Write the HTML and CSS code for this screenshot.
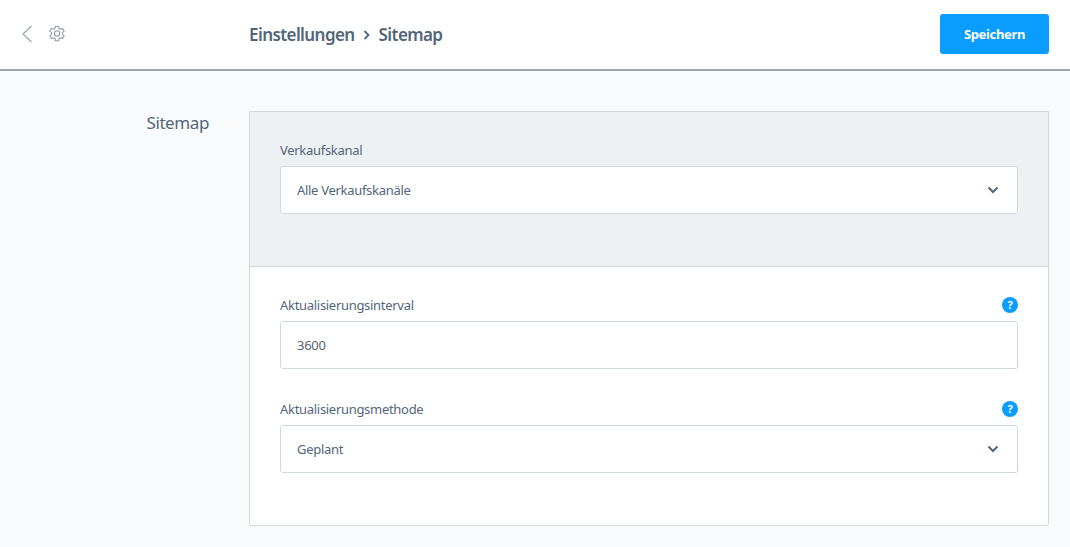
FILE: index.html
```html
<!DOCTYPE html>
<html lang="de">
<head>
<meta charset="utf-8">
<title>Sitemap</title>
<link rel="stylesheet" href="styles.css">
</head>
<body>
<header class="topbar">
  <div class="nav-icons">
    <svg class="icon-back" width="12" height="18" viewBox="0 0 12 18"><path d="M10.500 1 2 9l8.500 8" fill="none" stroke="#9aa8b5" stroke-width="1.300"/></svg>
    <svg class="icon-gear" width="18" height="18" viewBox="0 0 18 18" fill="none" stroke="#8d9aa7" stroke-width="1.100" stroke-linejoin="round"><path d="M7.400 1.200h3.200l.4 2.200 1.500.8 2.100-.8 1.600 2.800-1.700 1.400v1.800l1.700 1.400-1.600 2.800-2.100-.8-1.500.8-.4 2.200H7.400L7 13.600l-1.500-.8-2.100.8-1.600-2.800 1.700-1.400V7.600L1.800 6.200l1.600-2.800 2.100.8L7 3.400z"/><circle cx="9" cy="8.500" r="2.700"/></svg>
  </div>
  <div class="crumbs">
    <span>Einstellungen</span>
    <svg class="crumb-sep" width="8" height="12" viewBox="0 0 8 12"><path d="m1.500 2 4 4-4 4" fill="none" stroke="#52667a" stroke-width="1.800"/></svg>
    <span>Sitemap</span>
  </div>
  <button class="save" type="button">Speichern</button>
</header>
<main class="content">
  <h2 class="section-title">Sitemap</h2>
  <section class="card">
    <div class="card-top">
      <div class="field">
        <div class="label-row"><label>Verkaufskanal</label></div>
        <div class="control"><span>Alle Verkaufskanäle</span>
          <svg class="chev" width="12" height="8" viewBox="0 0 12 8"><path d="m1.500 1.500 4.500 4.500 4.500-4.500" fill="none" stroke="#52667a" stroke-width="2"/></svg>
        </div>
      </div>
    </div>
    <div class="card-body">
      <div class="field">
        <div class="label-row"><label>Aktualisierungsinterval</label><span class="help">?</span></div>
        <div class="control"><span>3600</span></div>
      </div>
      <div class="field">
        <div class="label-row"><label>Aktualisierungsmethode</label><span class="help">?</span></div>
        <div class="control"><span>Geplant</span>
          <svg class="chev" width="12" height="8" viewBox="0 0 12 8"><path d="m1.500 1.500 4.500 4.500 4.500-4.500" fill="none" stroke="#52667a" stroke-width="2"/></svg>
        </div>
      </div>
    </div>
  </section>
</main>
</body>
</html>
```
FILE: styles.css
```css
* { box-sizing: border-box; }
html, body { margin: 0; height: 100%; }
body {
  background: #f9fafb;
  color: #52667a;
  font-family: "Noto Sans", sans-serif;
  font-size: 13px;
  overflow: hidden;
}
.topbar {
  height: 71px;
  background: #fff;
  border-bottom: 2px solid #9aa8b5;
  display: grid;
  grid-template-columns: 249px 1fr auto;
  align-items: center;
  padding-right: 21px;
}
.nav-icons {
  display: flex;
  align-items: center;
  gap: 15px;
  padding-left: 21px;
  padding-bottom: 1px;
}
.crumbs {
  display: flex;
  align-items: center;
  gap: 8px;
  font-size: 17px;
  font-weight: 600;
  letter-spacing: -0.58px;
  color: #52667a;
}
.save {
  width: 109px;
  height: 40px;
  margin-bottom: 1px;
  border: 0;
  border-radius: 3px;
  background: #0a9dff;
  color: #fff;
  font: 700 13px "Noto Sans", sans-serif;
  letter-spacing: -0.33px;
}
.content {
  display: grid;
  grid-template-columns: 249px 800px;
  padding-top: 40px;
}
.section-title {
  margin: 0;
  padding: 0 40px 0 0;
  text-align: right;
  font-size: 17px;
  font-weight: 400;
  line-height: 24px;
  letter-spacing: -0.4px;
  color: #52667a;
}
.card {
  height: 415px;
  background: #fff;
  border: 1px solid #d1d9e0;
  border-radius: 0 0 3px 3px;
  overflow: hidden;
}
.card-top {
  height: 155px;
  padding: 29px 30px 0;
  background: #eef1f4;
  border-bottom: 1px solid #d1d9e0;
}
.card-body {
  display: flex;
  flex-direction: column;
  gap: 31px;
  padding: 29px 30px 0;
}
.label-row {
  display: flex;
  justify-content: space-between;
  align-items: center;
  height: 18px;
  margin-bottom: 7px;
}
.label-row label { letter-spacing: -0.3px; }
.help {
  width: 16px;
  height: 16px;
  border-radius: 50%;
  background: #0a9dff;
  color: #fff;
  font-size: 11px;
  font-weight: 700;
  line-height: 16px;
  text-align: center;
}
.control {
  height: 48px;
  padding: 0 18px 0 16px;
  background: #fff;
  border: 1px solid #d1d9e0;
  border-radius: 3px;
  display: flex;
  align-items: center;
  justify-content: space-between;
  letter-spacing: -0.3px;
}
```
